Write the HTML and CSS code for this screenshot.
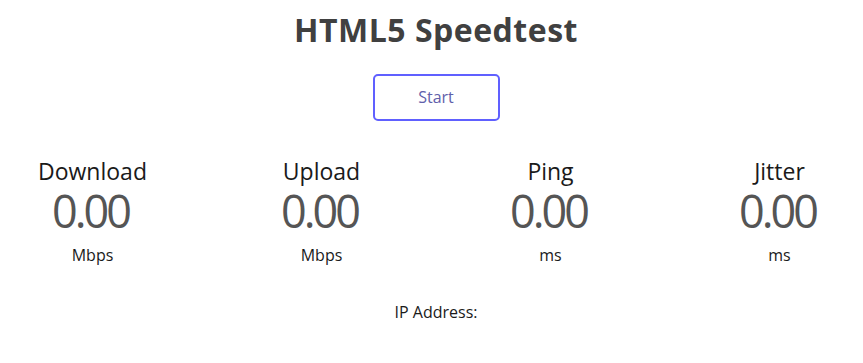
FILE: index.html
```html
<!DOCTYPE html>
<html lang="en">
<head>
<meta charset="utf-8">
<title>HTML5 Speedtest</title>
<link rel="stylesheet" href="styles.css">
</head>
<body>
<main class="page">
  <h1 class="title">HTML5 Speedtest</h1>
  <div class="start-btn">Start</div>
  <section class="tests">
    <div class="test-area">
      <div class="test-name">Download</div>
      <div class="meter-text">0.00</div>
      <div class="unit">Mbps</div>
    </div>
    <div class="test-area">
      <div class="test-name">Upload</div>
      <div class="meter-text">0.00</div>
      <div class="unit">Mbps</div>
    </div>
    <div class="test-area">
      <div class="test-name">Ping</div>
      <div class="meter-text">0.00</div>
      <div class="unit">ms</div>
    </div>
    <div class="test-area">
      <div class="test-name">Jitter</div>
      <div class="meter-text">0.00</div>
      <div class="unit">ms</div>
    </div>
  </section>
  <div class="ip-area">IP Address: <span class="ip"></span></div>
</main>
</body>
</html>
```

FILE: styles.css
```css
html, body {
  margin: 0;
  padding: 0;
  background: #ffffff;
}

.page {
  box-sizing: border-box;
  width: 863px;
  padding-left: 9px;
  text-align: center;
  font-family: "Open Sans", "Noto Sans", sans-serif;
  color: #1e1e1e;
  display: flex;
  flex-direction: column;
  align-items: center;
}

.title {
  margin: 0;
  padding-top: 10px;
  font-size: 32px;
  line-height: 40px;
  font-weight: 700;
  color: #404040;
  letter-spacing: 0.5px;
}

.start-btn {
  box-sizing: border-box;
  margin-top: 24px;
  width: 127px;
  height: 47px;
  border: 2px solid #6060ff;
  border-radius: 5px;
  color: #6060aa;
  font-size: 16px;
  line-height: 43px;
}

.tests {
  margin-top: 36px;
  display: grid;
  grid-template-columns: repeat(4, 150px);
  column-gap: 79px;
}

.test-area {
  display: flex;
  flex-direction: column;
  align-items: center;
}

.test-name {
  font-size: 23px;
  line-height: 28px;
  color: #1a1a1a;
}

.meter-text {
  font-size: 45px;
  line-height: 52px;
  color: #555555;
  letter-spacing: -3px;
  margin-right: 4px;
}

.unit {
  margin-top: 8px;
  font-size: 16px;
  line-height: 20px;
  color: #1a1a1a;
}

.ip-area {
  margin-top: 37px;
  font-size: 16px;
  line-height: 20px;
  color: #1a1a1a;
}
```
